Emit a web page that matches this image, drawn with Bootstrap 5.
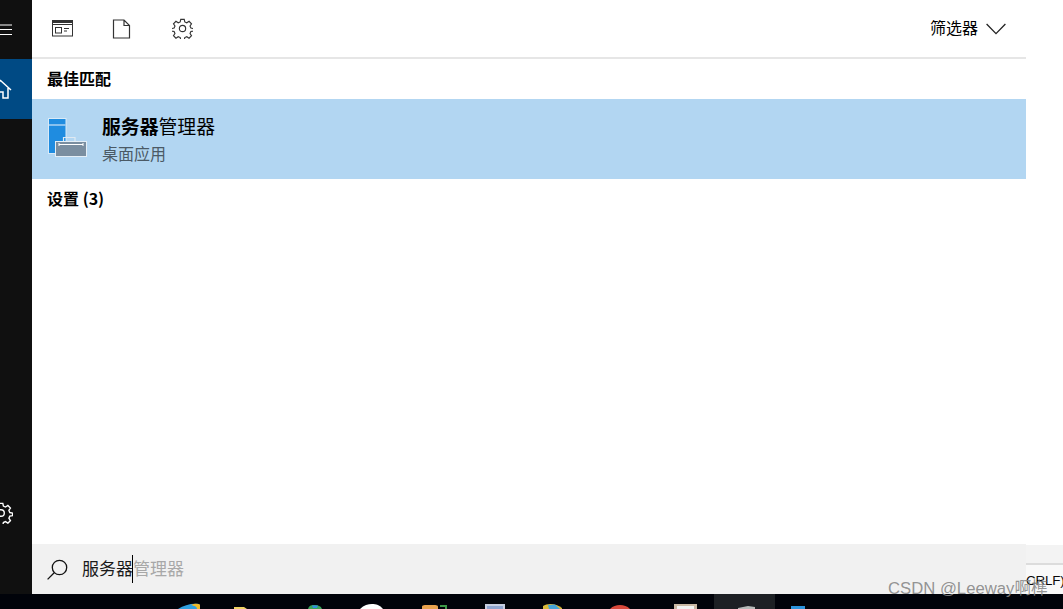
<!DOCTYPE html>
<html lang="zh">
<head>
<meta charset="utf-8">
<title>搜索</title>
<link href="https://cdn.jsdelivr.net/npm/bootstrap@5.3.0/dist/css/bootstrap.min.css" rel="stylesheet">
<style>
html,body{height:100%;overflow:hidden;background:#fff;}
body{font-family:"Microsoft YaHei","Noto Sans CJK SC","Liberation Sans",sans-serif;color:#000;}
.stage{width:1063px;height:609px;position:relative;overflow:hidden;}
.upper{height:594px;}
.rail{width:32px;background:#101010;overflow:hidden;}
.rail-burger{height:59px;}
.rail-home{height:60px;background:#004a84;}
.rail svg{margin-left:-11px;display:block;}
.rail-foot{padding-bottom:70px;}
.panel{width:994px;}
.tools{height:59px;border-bottom:2px solid #e6e6e6;padding:0 20px 0 20px;}
.tool-gap{gap:39px;}
.tool-doc{margin-right:2px;}
.filter-box{padding-bottom:3px;}
.filter-label{font-size:16px;line-height:20px;}
.filter-arrow{margin-top:3px;}
.head-label{font-size:16px;font-weight:700;line-height:20px;padding-left:15px;padding-bottom:2px;}
.head-best{height:40px;}
.head-set{height:40px;}
.hit{height:80px;background:#b2d6f2;padding-left:15px;gap:15px;}
.hit-title{font-size:18.85px;line-height:26px;margin-top:-2px;}
.hit-title b{font-weight:700;}
.hit-sub{font-size:16px;line-height:22px;color:#4b5a66;margin-top:3px;}
.filler{flex:1;}
.search-box{height:50px;background:#f1f1f1;padding-left:15px;gap:14px;}
.search-text{padding-bottom:2px;}
.typed{font-size:17px;line-height:24px;color:#1a1a1a;}
.ghost{font-size:17px;line-height:24px;color:#a8a8a8;}
.caret{width:1px;height:28px;background:#000;margin:2px 0 0 -1px;}
.side-strip{flex:1;}
.strip-top{height:545px;}
.strip-gray{height:20px;background:#f3f3f3;border-bottom:2px solid #dcdcdc;}
.strip-text{font-family:"Liberation Sans",sans-serif;font-size:13.4px;line-height:20px;color:#0a0a0a;padding-top:6px;white-space:nowrap;background:#f9f9f9;height:29px;letter-spacing:-.2px;}
.taskbar{height:15px;background:#01030a;overflow:hidden;}
.mark-text{position:absolute;left:888px;top:579px;font-family:"Liberation Sans","Noto Sans CJK SC",sans-serif;font-size:16.7px;line-height:20px;color:rgba(135,135,135,.9);white-space:nowrap;}
</style>
</head>
<body>
<div class="stage d-flex flex-column">
  <div class="upper d-flex">
    <div class="rail d-flex flex-column flex-shrink-0">
      <div class="rail-burger d-flex align-items-center">
        <svg width="23" height="12" viewBox="0 0 23 12"><path d="M0 1H23M0 5.5H23M0 10.5H23" stroke="#fff" stroke-width="1"/></svg>
      </div>
      <div class="rail-home d-flex align-items-center">
        <svg width="24" height="20" viewBox="0 0 24 20" fill="none" stroke="#fff" stroke-width="1.5"><path d="M1 11 11.5 1.5 22 11M4 9V19H9V13H14V19H19V9"/></svg>
      </div>
      <div class="rail-foot flex-grow-1 d-flex flex-column justify-content-end">
        <svg width="24" height="22" viewBox="0 0 24 24" fill="none" stroke="#fff" stroke-width="1.5"><circle cx="12" cy="12" r="3.6"/><path d="M10 1.5h4l.6 3 2.3 1 2.6-1.7 2.8 2.8-1.7 2.6 1 2.3 3 .6v2.7l-3 .6-1 2.3 1.7 2.6-2.8 2.8-2.6-1.7-2.3 1-.6 3h-4l-.6-3-2.3-1-2.6 1.7-2.8-2.8 1.7-2.6-1-2.3-3-.6v-2.7l3-.6 1-2.3-1.7-2.6 2.8-2.8 2.6 1.7 2.3-1z"/></svg>
      </div>
    </div>

    <div class="panel d-flex flex-column flex-shrink-0">
      <div class="tools d-flex align-items-center justify-content-between">
        <div class="d-flex align-items-center tool-gap">
          <svg width="21" height="19" viewBox="0 0 21 19" fill="none" stroke="#333" stroke-width="1"><rect x=".5" y="1.5" width="20" height="15.5"/><path d="M1 2.5H20M1 3.5H20M1 5.5H20"/><rect x="3.5" y="8.5" width="6" height="5.5"/><path d="M12 9.5H17M12 12H15"/></svg>
          <svg class="tool-doc" width="19" height="20" viewBox="0 0 19 20" fill="none" stroke="#333" stroke-width="1.2"><path d="M1.5 1H12L17.5 6.5V19H1.5ZM12 1V6.5H17.5"/></svg>
          <svg width="21" height="21" viewBox="0 0 24 24" fill="none" stroke="#333" stroke-width="1.3"><circle cx="12" cy="12" r="3.6"/><path d="M10 1.5h4l.6 3 2.3 1 2.6-1.7 2.8 2.8-1.7 2.6 1 2.3 3 .6v2.7l-3 .6-1 2.3 1.7 2.6-2.8 2.8-2.6-1.7-2.3 1-.6 3h-4l-.6-3-2.3-1-2.6 1.7-2.8-2.8 1.7-2.6-1-2.3-3-.6v-2.7l3-.6 1-2.3-1.7-2.6 2.8-2.8 2.6 1.7 2.3-1z"/></svg>
        </div>
        <div class="filter-box d-flex align-items-center gap-2">
          <span class="filter-label">筛选器</span>
          <svg class="filter-arrow" width="20" height="12" viewBox="0 0 20 12" fill="none" stroke="#222" stroke-width="1.3"><path d="M.6 1 10 10.6 19.4 1"/></svg>
        </div>
      </div>
      <div class="head-best d-flex align-items-center"><div class="head-label">最佳匹配</div></div>
      <div class="hit d-flex align-items-center">
        <svg width="40" height="42" viewBox="0 0 40 42" class="flex-shrink-0">
          <rect x="1.5" y=".5" width="17.5" height="35" fill="#1f8ce0" stroke="#d8eaf8" stroke-width="1"/>
          <path d="M2 7H18.5" stroke="#cfe4f6" stroke-width="1.2"/>
          <path d="M16.5 23V19.5H28V23" fill="none" stroke="#dfe9f2" stroke-width="1.2"/>
          <rect x="8.5" y="23.5" width="31" height="15" fill="#7a8ea0" stroke="#e4eef6" stroke-width="1"/>
          <path d="M12 26.5H36M12 25V28M36 25V28" stroke="#fff" stroke-width="1"/>
        </svg>
        <div>
          <div class="hit-title"><b>服务器</b>管理器</div>
          <div class="hit-sub">桌面应用</div>
        </div>
      </div>
      <div class="head-set d-flex align-items-center"><div class="head-label">设置 (3)</div></div>
      <div class="filler"></div>
      <div class="search-box d-flex align-items-center">
        <svg width="21" height="21" viewBox="0 0 21 21" fill="none" stroke="#111" stroke-width="1.3" class="flex-shrink-0"><circle cx="12.5" cy="8.5" r="7.2"/><path d="M7.2 13.8.6 20.4"/></svg>
        <div class="search-text d-flex align-items-center">
          <span class="typed">服务器</span><span class="caret"></span><span class="ghost">管理器</span>
        </div>
      </div>
    </div>

    <div class="side-strip d-flex flex-column">
      <div class="strip-top"></div>
      <div class="strip-gray"></div>
      <div class="strip-text">CRLF)</div>
    </div>
  </div>

  <div class="taskbar d-flex">
    <svg width="1063" height="15" viewBox="0 0 1063 15">
      <rect x="714" width="61" height="15" fill="#1d2024"/>
      <path d="M178 15C184 11 192 9 199 10L200 15Z" fill="#2f9fe0"/>
      <path d="M191 11C194 9.500 198 9.500 200 10.500L200 15H197C197 12 194 12 191 11Z" fill="#f0b92a"/>
      <path d="M234 13H244L247 15H234Z" fill="#f0d264"/>
      <path d="M308 15C309 11 312 11 315 11C318 11 321 12 322 15Z" fill="#3aa45a"/><path d="M312 11.500H318L317 14H313Z" fill="#2f8fe0"/>
      <path d="M360 15C364 11 368 10 372 10C376 10 380 11 383 15Z" fill="#fff"/>
      <path d="M422 15V13C422 11 424 11 430 11C436 11 438 11 438 13V15Z" fill="#eaa24e"/><path d="M440 12H446V15" fill="none" stroke="#3e9a48" stroke-width="2"/>
      <rect x="485" y="10" width="20" height="5" fill="#c6cde0"/><rect x="487" y="12" width="16" height="3" fill="#8fa4cf"/>
      <path d="M543 12C547 9 556 9 562 14V15H543Z" fill="#d9b93a"/><path d="M548 11 555 10.500 560 15H549Z" fill="#45a3d8"/>
      <path d="M610 15C613 12 616 11 620 11C624 11 627 12 630 15Z" fill="#d9483b"/>
      <rect x="674" y="10" width="23" height="5" fill="#c9b8a4"/><rect x="677" y="12" width="17" height="3" fill="#f3f3f3"/>
      <path d="M738 14 748 12 755 13V15H738Z" fill="#b5bab8"/>
      <rect x="791" y="12" width="14" height="3" fill="#2b93dd"/>
    </svg>
  </div>
  <div class="mark-text">CSDN @Leeway啊榫</div>
</div>
<script src="https://cdn.jsdelivr.net/npm/bootstrap@5.3.0/dist/js/bootstrap.bundle.min.js"></script>
</body>
</html>
